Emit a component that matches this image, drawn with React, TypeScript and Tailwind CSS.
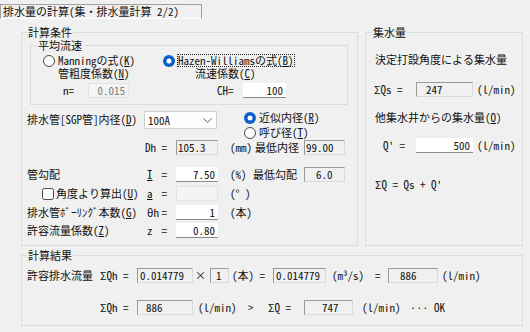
import type { ReactNode } from "react";

function U({ children }: { children: ReactNode }) {
  return <span className="underline underline-offset-[1px]">{children}</span>;
}

function Group({
  title,
  className,
  titleClass,
  children,
}: {
  title: string;
  className: string;
  titleClass: string;
  children: ReactNode;
}) {
  return (
    <div className={`flex shrink-0 flex-col border border-[#dcdcdc] ${className}`}>
      <div className={`-mt-[7px] h-[13px] w-fit bg-[#f0f0f0] px-[1px] ${titleClass}`}>{title}</div>
      {children}
    </div>
  );
}

function Radio({ checked, focus, children }: { checked?: boolean; focus?: boolean; children: ReactNode }) {
  return (
    <div className="flex h-[13px] items-center">
      <svg width="12" height="12" viewBox="0 0 12 12" className="shrink-0">
        {checked ? (
          <>
            <circle cx="6" cy="6" r="6" fill="#0a5fc4" />
            <circle cx="6" cy="6" r="2.5" fill="#fff" />
          </>
        ) : (
          <circle cx="6" cy="6" r="5.5" fill="#fbfbfb" stroke="#4a4a4a" />
        )}
      </svg>
      <span
        className={`ml-[2px] whitespace-nowrap leading-[11px] ${
          focus ? "border border-dotted border-[#222]" : "border border-transparent"
        }`}
      >
        {children}
      </span>
    </div>
  );
}

function Sunken({ className, children }: { className: string; children: ReactNode }) {
  return (
    <div
      className={`h-[15px] shrink-0 whitespace-pre border border-[#dadada] border-t-[#9a9a9a] border-l-[#9a9a9a] bg-[#f0f0f0] leading-[13px] ${className}`}
    >
      {children}
    </div>
  );
}

function Edit({ className, children }: { className: string; children: ReactNode }) {
  return (
    <div
      className={`h-[15px] shrink-0 border-b border-b-[#8a8a8a] bg-white pr-[3px] text-right leading-[14px] ${className}`}
    >
      {children}
    </div>
  );
}

function Disabled({ className, children }: { className: string; children?: ReactNode }) {
  return (
    <div
      className={`h-[15px] shrink-0 border border-[#e4e4e4] bg-[#f4f4f4] pr-[3px] text-right leading-[13px] text-[#7a7a7a] ${className}`}
    >
      {children}
    </div>
  );
}

function Sym({ s, pad }: { s: ReactNode; pad?: boolean }) {
  return (
    <div className={`flex w-[22px] shrink-0 justify-between ${pad ? "pl-[2px]" : ""}`}>
      <span>{s}</span>
      <span>=</span>
    </div>
  );
}

export default function App() {
  return (
    <div className="h-[332px] w-[530px] overflow-hidden bg-[#f0f0f0] pt-[4px] font-['Noto_Sans_Mono_CJK_JP','Noto_Sans_CJK_JP',monospace] text-[11px] leading-[13px] text-[#111]">
      {/* caption */}
      <div className="h-[15px] w-[202px] whitespace-nowrap border border-[#a0a0a0] border-b-white pl-[2px] leading-[13px]">
        排水量の計算(集・排水量計算 2/2)
      </div>

      <div className="ml-[21px] mt-[13px] flex">
        {/* 計算条件 */}
        <Group title="計算条件" className="h-[214px] w-[337px]" titleClass="ml-[5px]">
          <div className="ml-[8px] mt-[6px] flex h-[60px] w-[318px] flex-col border border-[#dcdcdc]">
            <div className="-mt-[7px] ml-[6px] h-[13px] w-fit bg-[#f0f0f0] px-[1px]">平均流速</div>
            <div className="mt-[2px] grid grid-cols-[120px_1fr] pl-[12px]">
              <Radio>
                Manningの式(<U>K</U>)
              </Radio>
              <Radio checked focus>
                Hazen-Williamsの式(<U>B</U>)
              </Radio>
              <div className="h-[13px] pl-[15px]">
                管粗度係数(<U>N</U>)
              </div>
              <div className="h-[13px] pl-[32px]">
                流速係数(<U>C</U>)
              </div>
              <div className="mt-[3px] flex items-center pl-[20px]">
                <div className="w-[25px]">n=</div>
                <Disabled className="w-[41px]">0.015</Disabled>
              </div>
              <div className="mt-[3px] flex items-center pl-[54px]">
                <div className="w-[26px]">CH=</div>
                <Edit className="w-[43px]">100</Edit>
              </div>
            </div>
          </div>

          {/* 内径 */}
          <div className="mt-[5px] flex h-[30px] pl-[5px]">
            <div className="mt-[3px] w-[117px] whitespace-nowrap">
              排水管[SGP管]内径(<U>D</U>)
            </div>
            <div className="mt-[1px] flex h-[18px] w-[73px] items-center justify-between border border-[#d0d0d0] bg-[#fdfdfd] pl-[3px] pr-[4px]">
              <span>100A</span>
              <svg width="9" height="5" viewBox="0 0 9 5">
                <polyline points="0.5,0.5 4.5,4.5 8.5,0.5" fill="none" stroke="#606060" strokeWidth="1" />
              </svg>
            </div>
            <div className="ml-[27px] flex flex-col">
              <div className="flex h-[15px] items-center">
                <Radio checked>
                  近似内径(<U>R</U>)
                </Radio>
              </div>
              <div className="flex h-[15px] items-center">
                <Radio>
                  呼び径(<U>T</U>)
                </Radio>
              </div>
            </div>
          </div>

          <div className="flex h-[15px] items-center pl-[5px]">
            <div className="w-[118px] shrink-0" />
            <Sym s="Dh" />
            <Sunken className="ml-[9px] w-[42px] pl-[1px]">105.3</Sunken>
            <div className="ml-[12px] w-[23px] shrink-0 whitespace-nowrap">(mm)</div>
            <div className="w-[51px] shrink-0 pl-[2px]">最低内径</div>
            <Sunken className="w-[41px] pl-[1px]">99.00</Sunken>
          </div>

          <div className="mt-[12px] flex h-[15px] items-center pl-[5px]">
            <div className="w-[118px] shrink-0">管勾配</div>
            <Sym s={<U>I</U>} pad />
            <Edit className="ml-[9px] w-[42px]">7.50</Edit>
            <div className="ml-[12px] w-[23px] shrink-0 whitespace-nowrap">(%)</div>
            <div className="w-[51px] shrink-0">最低勾配</div>
            <Sunken className="w-[41px] pl-[11px]">6.0</Sunken>
          </div>

          <div className="mt-[4px] flex h-[15px] items-center pl-[5px]">
            <div className="flex w-[118px] shrink-0 items-center pl-[15px]">
              <svg width="12" height="12" viewBox="0 0 12 12" className="shrink-0">
                <rect x="0.5" y="0.5" width="11" height="11" rx="2" fill="#fbfbfb" stroke="#4a4a4a" />
              </svg>
              <span className="ml-[2px] whitespace-nowrap">
                角度より算出(<U>U</U>)
              </span>
            </div>
            <Sym s={<U>a</U>} pad />
            <Disabled className="ml-[9px] w-[42px]" />
            <div className="ml-[12px] shrink-0 whitespace-pre">(° )</div>
          </div>

          <div className="mt-[4px] flex h-[15px] items-center pl-[5px]">
            <div className="w-[118px] shrink-0 whitespace-nowrap">
              排水管ﾎﾞｰﾘﾝｸﾞ本数(<U>G</U>)
            </div>
            <Sym s="θh" pad />
            <Edit className="ml-[9px] w-[42px]">1</Edit>
            <div className="ml-[12px] shrink-0">(本)</div>
          </div>

          <div className="mt-[3px] flex h-[15px] items-center pl-[5px]">
            <div className="w-[118px] shrink-0 whitespace-nowrap">
              許容流量係数(<U>Z</U>)
            </div>
            <Sym s="z" pad />
            <Edit className="ml-[9px] w-[42px]">0.80</Edit>
          </div>
        </Group>

        {/* 集水量 */}
        <Group title="集水量" className="ml-[7px] h-[214px] w-[158px]" titleClass="ml-[6px]">
          <div className="mt-[14px] pl-[9px]">決定打設角度による集水量</div>
          <div className="mt-[16px] flex h-[15px] items-center pl-[8px]">
            <div className="w-[42px] shrink-0 whitespace-pre">ΣQs =</div>
            <Sunken className="w-[57px] pl-[9px]">247</Sunken>
            <div className="ml-[4px] whitespace-nowrap">(l/min)</div>
          </div>
          <div className="mt-[14px] pl-[9px]">
            他集水井からの集水量(<U>O</U>)
          </div>
          <div className="mt-[14px] flex h-[15px] items-center pl-[17px]">
            <div className="w-[33px] shrink-0 whitespace-pre">Q' =</div>
            <Edit className="w-[57px]">500</Edit>
            <div className="ml-[4px] whitespace-nowrap">(l/min)</div>
          </div>
          <div className="mt-[25px] whitespace-pre pl-[9px]">ΣQ = Qs + Q'</div>
        </Group>
      </div>

      {/* 計算結果 */}
      <Group title="計算結果" className="ml-[21px] mt-[9px] h-[71px] w-[502px]" titleClass="ml-[5px]">
        <div className="mt-[6px] flex h-[15px] items-center pl-[5px]">
          <div className="w-[73px] shrink-0">許容排水流量</div>
          <div className="w-[37px] shrink-0 whitespace-pre">ΣQh =</div>
          <Sunken className="w-[56px] pl-[2px]">0.014779</Sunken>
          <div className="w-[17px] shrink-0 pl-[2px]">×</div>
          <Sunken className="w-[19px] pl-[5px]">1</Sunken>
          <div className="w-[44px] shrink-0 whitespace-pre pl-[3px]">(本) =</div>
          <Sunken className="w-[53px] pl-[2px]">0.014779</Sunken>
          <div className="w-[48px] shrink-0 whitespace-nowrap pl-[6px]">(m³/s)</div>
          <div className="w-[14px] shrink-0 pl-[1px]">=</div>
          <Sunken className="w-[50px] pl-[11px]">886</Sunken>
          <div className="ml-[4px] whitespace-nowrap">(l/min)</div>
        </div>
        <div className="mt-[17px] flex h-[15px] items-center pl-[5px]">
          <div className="w-[73px] shrink-0" />
          <div className="w-[37px] shrink-0 whitespace-pre">ΣQh =</div>
          <Sunken className="w-[56px] pl-[8px]">886</Sunken>
          <div className="w-[55px] shrink-0 whitespace-nowrap pl-[5px]">(l/min)</div>
          <div className="w-[20px] shrink-0">&gt;</div>
          <div className="w-[36px] shrink-0 whitespace-pre">ΣQ =</div>
          <Sunken className="w-[49px] pl-[17px]">747</Sunken>
          <div className="w-[57px] shrink-0 whitespace-nowrap pl-[9px]">(l/min)</div>
          <div className="whitespace-pre">··· OK</div>
        </div>
      </Group>
    </div>
  );
}
